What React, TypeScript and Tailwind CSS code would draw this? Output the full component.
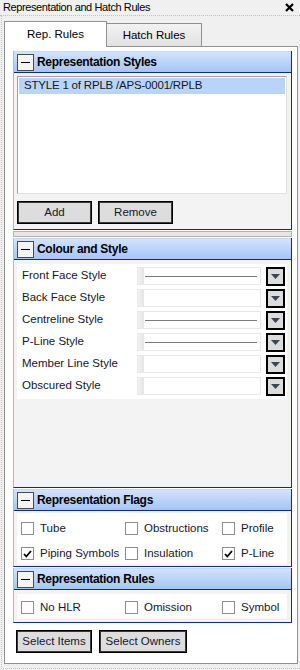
import React from "react";

const ink = "text-[#16162a]";

const Minus = () => (
  <div className="w-[17px] h-[17px] ml-[3px] mr-[3px] border border-[#4a4a4a] bg-[#f4f4f4] flex items-center justify-center shrink-0">
    <div className="w-[9px] h-[1px] bg-black" />
  </div>
);

const Header = ({ title }: { title: string }) => (
  <div className="h-[22px] flex items-center bg-gradient-to-b from-[#d2e3fd] to-[#a6c4f4] border-t border-t-[#c4d8fa] border-b border-b-[#0b2d8d]">
    <Minus />
    <span className="font-bold text-[12px] text-black tracking-[-0.3px]">{title}</span>
  </div>
);

const Panel = ({ title, children, className }: { title: string; children: React.ReactNode; className: string }) => (
  <div className="w-[279px] border-l border-l-[#9cbaee] border-r border-r-[#0b2d8d] border-b border-b-[#0b2d8d] bg-[#f3f3f3]">
    <Header title={title} />
    <div className={className}>{children}</div>
  </div>
);

const WinButton = ({ label, w }: { label: string; w: string }) => (
  <button className={`${w} h-[23px] bg-[#dddddd] border border-black shadow-[inset_0_0_0_1px_#3a3a3a] text-[11.5px] ${ink} flex items-center justify-center`}>
    {label}
  </button>
);

const Combo = ({ line }: { line: boolean }) => (
  <div className="flex items-center gap-[5px]">
    <div className="w-[124px] h-[18px] bg-white border border-[#e8e8e8] flex">
      <div className="w-[6px] h-full bg-gradient-to-r from-[#f2f2f2] to-[#e4e4e4]" />
      <div className="flex-1 flex items-center pr-[3px] pl-[1px]">
        {line && <div className="w-full h-[1px] bg-[#7a7a7a]" />}
      </div>
    </div>
    <div className="w-[19px] h-[19px] bg-[#dcdcdc] border-2 border-black flex items-center justify-center">
      <svg width="9" height="5" viewBox="0 0 9 5">
        <path d="M0 0 H9 L4.5 5 Z" fill="#3a4656" />
      </svg>
    </div>
  </div>
);

const Check = ({ label, checked }: { label: string; checked?: boolean }) => (
  <div className="flex items-center">
    <div className="w-[13px] h-[13px] border border-[#8e8e8e] bg-white flex items-center justify-center shrink-0">
      {checked && (
        <svg width="9" height="8" viewBox="0 0 9 8">
          <path d="M1 4 L3.3 6.5 L8 1" stroke="#000" strokeWidth="1.8" fill="none" />
        </svg>
      )}
    </div>
    <span className={`ml-[6px] text-[11.5px] ${ink}`}>{label}</span>
  </div>
);

const styleRows = [
  { label: "Front Face Style", line: true },
  { label: "Back Face Style", line: false },
  { label: "Centreline Style", line: true },
  { label: "P-Line Style", line: true },
  { label: "Member Line Style", line: false },
  { label: "Obscured Style", line: false },
];

export default function App() {
  return (
    <div
      className="w-[300px] h-[670px] bg-[#f0f0f0] overflow-hidden"
      style={{ fontFamily: '"Liberation Sans", Arial, sans-serif' }}
    >
      {/* Title */}
      <div className="h-[16px] flex items-center justify-between pl-[3px] pr-[6px] border-b border-dotted border-[#c0c0c0]">
        <span className="text-[11px] text-black tracking-[-0.4px]">Representation and Hatch Rules</span>
        <svg width="9" height="9" viewBox="0 0 9 9">
          <path d="M1 1 L8 8 M8 1 L1 8" stroke="#000" strokeWidth="2.2" />
        </svg>
      </div>

      <div className="ml-[1px] pl-[1px] h-[653px] border-l border-dotted border-[#c0c0c0] border-b">
        {/* Tabs */}
        <div className="flex items-end pt-[5px] pl-[1px]">
          <div className="w-[103px] h-[26px] bg-white border border-b-0 border-[#919191] relative z-10 -mb-px flex items-center justify-center text-[11.5px] text-black">
            Rep. Rules
          </div>
          <div className="w-[95px] h-[23px] bg-gradient-to-b from-[#f2f2f2] to-[#e2e2e2] border border-l-0 border-b-0 border-[#919191] flex items-center justify-center text-[11.5px] text-black pt-[2px]">
            Hatch Rules
          </div>
        </div>

        {/* Tab page */}
        <div className="ml-[1px] w-[294px] h-[618px] bg-white border border-[#919191] pl-[8px] pt-[4px] flex flex-col">
          <Panel title="Representation Styles" className="h-[156px] pl-[3px] pt-[3px] flex flex-col">
            <div className="w-[270px] h-[118px] bg-white border border-[#a0a0a0] border-r-[#e0e0e0] border-b-[#e0e0e0] p-[1px]">
              <div className={`h-[16px] bg-[#b8d5f8] flex items-center pl-[5px] text-[11.5px] tracking-[-0.2px] ${ink}`}>
                STYLE 1 of RPLB /APS-0001/RPLB
              </div>
            </div>
            <div className="flex gap-[6px] mt-[7px]">
              <WinButton label="Add" w="w-[75px]" />
              <WinButton label="Remove" w="w-[75px]" />
            </div>
          </Panel>

          {/* splitter */}
          <div className="w-[279px] h-[6px] mt-[1px] mb-[1px] bg-[#e6e6e6] border border-[#b4b4b4]" />

          <Panel title="Colour and Style" className="h-[227px] pl-[3px] pt-[4px]">
            <div className="w-[270px] bg-white pt-[1px] pb-[2px]">
              {styleRows.map((r) => (
                <div key={r.label} className="h-[22px] flex items-center justify-between pl-[5px] pr-[2px]">
                  <span className={`text-[11.5px] ${ink}`}>{r.label}</span>
                  <Combo line={r.line} />
                </div>
              ))}
            </div>
          </Panel>

          <div className="h-[1px]" />

          <Panel title="Representation Flags" className="h-[55px] pl-[3px] pt-[2px]">
            <div className="w-[270px] h-[51px] bg-white grid grid-cols-[104px_97px_1fr] grid-rows-[25px_25px] pt-[3px] items-center pl-[4px]">
              <Check label="Tube" />
              <Check label="Obstructions" />
              <Check label="Profile" />
              <Check label="Piping Symbols" checked />
              <Check label="Insulation" />
              <Check label="P-Line" checked />
            </div>
          </Panel>

          <div className="h-[1px]" />

          <Panel title="Representation Rules" className="h-[32px] pl-[3px] pt-[4px]">
            <div className="w-[270px] h-[24px] bg-white grid grid-cols-[104px_97px_1fr] items-center pl-[4px] pt-[3px]">
              <Check label="No HLR" />
              <Check label="Omission" />
              <Check label="Symbol" />
            </div>
          </Panel>

          <div className="flex gap-[7px] mt-[7px] ml-[3px]">
            <WinButton label="Select Items" w="w-[76px]" />
            <WinButton label="Select Owners" w="w-[88px]" />
          </div>
        </div>
      </div>
    </div>
  );
}
